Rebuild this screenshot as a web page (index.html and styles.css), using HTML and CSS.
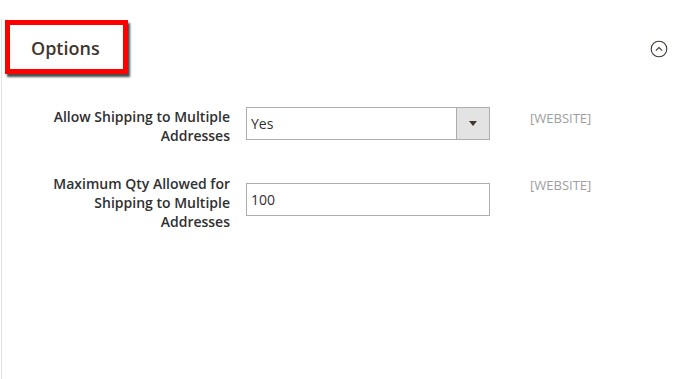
FILE: index.html
```html
<!DOCTYPE html>
<html lang="en">
<head>
    <meta charset="UTF-8">
    <meta name="viewport" content="width=device-width, initial-scale=1.0">
    <title>Options</title>
    <link rel="stylesheet" href="styles.css">
</head>
<body>
    <div class="panel">
        <div class="section-head">
            <div class="title-box">
                <span class="title">Options</span>
            </div>
            <span class="toggle">
                <svg width="18" height="18" viewBox="0 0 18 18">
                    <circle cx="9" cy="9" r="7.8" fill="none" stroke="#41362f" stroke-width="1.1"/>
                    <path d="M5.8 10.6 L9 7.6 L12.2 10.6" fill="none" stroke="#41362f" stroke-width="1.1"/>
                </svg>
            </span>
        </div>

        <div class="fields">
            <div class="field">
                <label class="field-label">Allow Shipping to Multiple Addresses</label>
                <div class="control select">
                    <span class="value">Yes</span>
                    <span class="select-btn"><span class="arrow"></span></span>
                </div>
                <span class="scope">[WEBSITE]</span>
            </div>
            <div class="field">
                <label class="field-label">Maximum Qty Allowed for Shipping to Multiple Addresses</label>
                <div class="control input">
                    <span class="value">100</span>
                </div>
                <span class="scope">[WEBSITE]</span>
            </div>
        </div>
    </div>
</body>
</html>
```

FILE: styles.css
```css
html, body {
    margin: 0;
    height: 100%;
}
body {
    background-color: #fff;
    font-family: 'Open Sans', 'Noto Sans', sans-serif;
    color: #303030;
    overflow: hidden;
}
.panel {
    margin-top: 18px;
    margin-left: 1px;
    border-left: 1px solid #e3e3e3;
    min-height: calc(100% - 18px);
    box-sizing: border-box;
}
.section-head {
    display: flex;
    justify-content: space-between;
    align-items: center;
    padding: 2px 17px 0 3px;
}
.title-box {
    width: 92px;
    height: 44px;
    border: 5px solid #ff0000;
    box-shadow: 2px 3px 2px rgba(0, 0, 0, 0.7);
    display: flex;
    align-items: center;
    padding-left: 21px;
}
.title {
    font-size: 18px;
    font-weight: 600;
    color: #41362f;
    padding-top: 2px;
}
.toggle {
    display: flex;
    margin-top: 4px;
}
.fields {
    margin-top: 27px;
    display: flex;
    flex-direction: column;
    gap: 23px;
}
.field {
    display: flex;
    align-items: center;
}
.field-label {
    width: 180px;
    padding: 6px 0 0 48px;
    text-align: right;
    font-size: 14px;
    font-weight: 600;
    line-height: 19px;
    color: #303030;
}
.control {
    margin-left: 16px;
    width: 244px;
    height: 33px;
    border: 1px solid #adadad;
    box-sizing: border-box;
    display: flex;
    align-items: center;
    font-size: 14px;
    color: #303030;
}
.value {
    flex: 1;
    padding-left: 4px;
}
.select-btn {
    width: 32px;
    height: 100%;
    background-color: #e3e3e3;
    border-left: 1px solid #adadad;
    display: flex;
    align-items: center;
    justify-content: center;
}
.arrow {
    width: 0;
    height: 0;
    border-left: 4px solid transparent;
    border-right: 4px solid transparent;
    border-top: 5px solid #41362f;
}
.scope {
    align-self: flex-start;
    margin-left: 40px;
    padding-top: 8px;
    font-size: 13px;
    line-height: 18px;
    color: #9e9e9e;
}
```
